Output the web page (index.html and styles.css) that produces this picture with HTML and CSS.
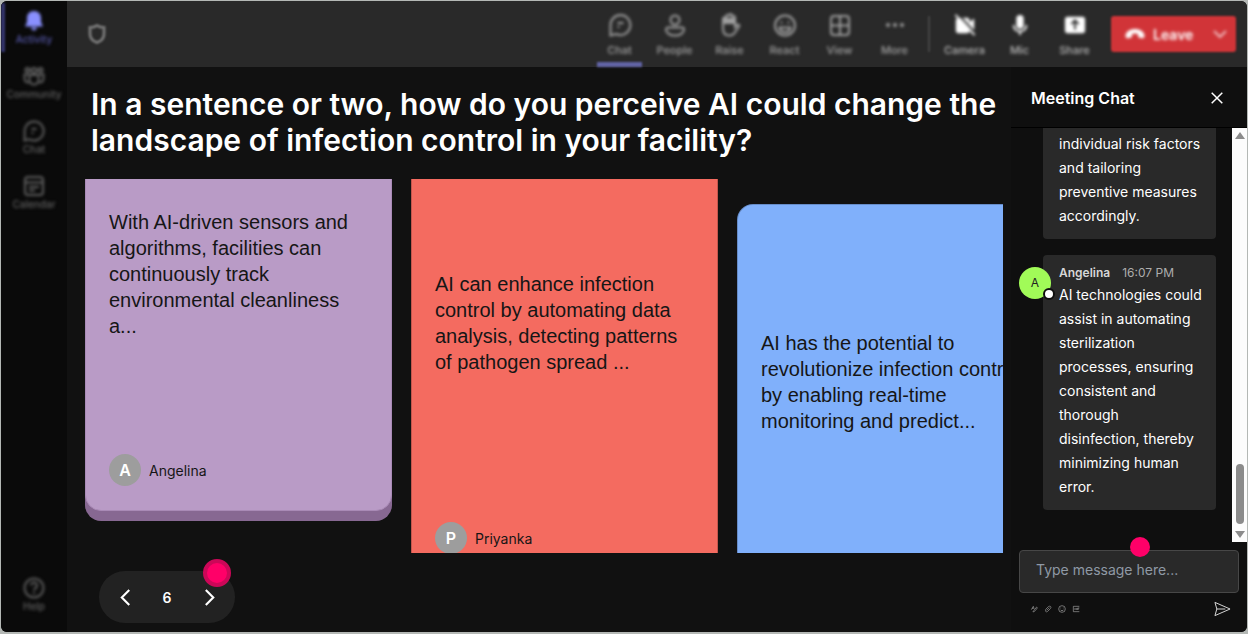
FILE: index.html
```html
<!DOCTYPE html>
<html lang="en">
<head>
    <meta charset="UTF-8">
    <meta name="viewport" content="width=device-width, initial-scale=1.0">
    <title>Meeting</title>
    <link rel="stylesheet" href="styles.css">
</head>
<body>
<div class="app">
    <nav class="sidebar">
        <button type="button" class="side-item active">
            <svg viewBox="0 0 22 22" fill="currentColor"><path d="M11 1c-4.200 0-7 3-7 7v4l-2 4.500h18L18 12V8c0-4-2.800-7-7-7zM8 17.500h6c-.4 2-1.500 3-3 3s-2.600-1-3-3z"/></svg>
            <span>Activity</span>
        </button>
        <button type="button" class="side-item">
            <svg viewBox="0 0 22 22" fill="none" stroke="currentColor" stroke-width="2"><circle cx="11" cy="5.500" r="2.500"/><circle cx="4.500" cy="5" r="2"/><circle cx="17.500" cy="5" r="2"/><path d="M6.500 10h9v5a4.500 4.500 0 0 1-9 0zM6 9.500H1.500V13c0 3 2 4.500 4.500 4.500M16 9.500h4.500V13c0 3-2 4.500-4.500 4.500"/></svg>
            <span>Community</span>
        </button>
        <button type="button" class="side-item">
            <svg viewBox="0 0 22 22" fill="none" stroke="currentColor" stroke-width="2"><path d="M11 1.500a9.500 9.500 0 1 1-4.500 17.800L1.500 20.500l.2-8A9.500 9.500 0 0 1 11 1.500zM8.500 9h5M8.500 13h2"/></svg>
            <span>Chat</span>
        </button>
        <button type="button" class="side-item">
            <svg viewBox="0 0 22 22" fill="none" stroke="currentColor" stroke-width="2"><rect x="2" y="2" width="18" height="18" rx="3"/><path d="M2 7.500h18M6 12h10M6 15.500h6"/></svg>
            <span>Calendar</span>
        </button>
        <button type="button" class="side-item side-help">
            <svg viewBox="0 0 22 22" fill="none" stroke="currentColor" stroke-width="2"><circle cx="11" cy="11" r="9.500"/><path d="M8 8.500a3 3 0 1 1 4.500 2.600c-1 .6-1.500 1.200-1.500 2.400M11 15v2"/></svg>
            <span>Help</span>
        </button>
    </nav>

    <div class="main">
        <header class="topbar">
            <svg class="shield" viewBox="0 0 20 20" fill="none" stroke="currentColor" stroke-width="3"><path d="M10 1.500c2 1.400 4.500 2 7 2V10c0 4-2.500 7-7 8.500C5.500 17 3 14 3 10V3.500c2.500 0 5-.6 7-2z"/></svg>
            <div class="tools">
                <button type="button" class="tool selected">
                    <svg viewBox="0 0 24 24" fill="none" stroke="currentColor" stroke-width="2"><path d="M12.500 2a10 10 0 1 1-4.500 19L2.500 22.500V12A10 10 0 0 1 12.500 2zM9.500 10h6M9.500 14h2"/></svg>
                    <span>Chat</span>
                </button>
                <button type="button" class="tool">
                    <svg viewBox="0 0 24 24" fill="none" stroke="currentColor" stroke-width="2"><circle cx="12" cy="7" r="4.500"/><path d="M5 14.500h14a2 2 0 0 1 2 2c0 3.500-4 6-9 6s-9-2.500-9-6a2 2 0 0 1 2-2z"/></svg>
                    <span>People</span>
                </button>
                <button type="button" class="tool">
                    <svg viewBox="0 0 24 24" fill="none" stroke="currentColor" stroke-width="2"><path d="M5 12V6a1.500 1.500 0 0 1 3 0V3.500a1.500 1.500 0 0 1 3 0V2.500a1.500 1.500 0 0 1 3 0v2a1.500 1.500 0 0 1 3 0V14l2-2c1-1 3 0 2 1.500L16.500 20c-1 1.500-2.500 2.500-5 2.500-4.500 0-6.500-3-6.500-7z"/><path d="M5 6h12v4H5z" fill="currentColor"/></svg>
                    <span>Raise</span>
                </button>
                <button type="button" class="tool">
                    <svg viewBox="0 0 24 24" fill="none" stroke="currentColor" stroke-width="2"><circle cx="12" cy="12.500" r="10"/><path d="M6.500 14.500h11c-.5 3-2.500 4.500-5.500 4.500s-5-1.500-5.500-4.500zM8.500 8.500v2M15.500 8.500v2"/></svg>
                    <span>React</span>
                </button>
                <button type="button" class="tool">
                    <svg viewBox="0 0 24 24" fill="none" stroke="currentColor" stroke-width="2"><rect x="3" y="3" width="18" height="19" rx="3"/><path d="M12 3v19M3 12.500h18"/></svg>
                    <span>View</span>
                </button>
                <button type="button" class="tool">
                    <svg viewBox="0 0 24 24" fill="currentColor"><circle cx="5" cy="12" r="2"/><circle cx="12" cy="12" r="2"/><circle cx="19" cy="12" r="2"/></svg>
                    <span>More</span>
                </button>
            </div>
            <div class="divider"></div>
            <div class="tools tools-call">
                <button type="button" class="tool">
                    <svg viewBox="0 0 24 24" fill="currentColor"><path d="M2 6l3-2h9a3 3 0 0 1 3 3v2l5-4v15l-5-4v2a3 3 0 0 1-3 3H5a3 3 0 0 1-3-3z"/><path d="M5 1l18 19" stroke="#292929" stroke-width="2"/><path d="M1.500 1l21 22" stroke="currentColor" stroke-width="2"/></svg>
                    <span>Camera</span>
                </button>
                <button type="button" class="tool">
                    <svg viewBox="0 0 24 24" fill="currentColor"><rect x="8" y="1" width="8" height="15" rx="4"/><path d="M5 12c0 4 3 7 7 7s7-3 7-7M12 19v4" fill="none" stroke="currentColor" stroke-width="2"/></svg>
                    <span>Mic</span>
                </button>
                <button type="button" class="tool">
                    <svg viewBox="0 0 24 24" fill="currentColor"><rect x="1" y="3" width="22" height="18" rx="3"/><path d="M12 17V7M8 11l4-4 4 4" fill="none" stroke="#292929" stroke-width="2"/></svg>
                    <span>Share</span>
                </button>
            </div>
            <div class="leave">
                <button type="button" class="leave-btn">
                    <svg viewBox="0 0 20 12" fill="currentColor"><path d="M10 1C5 1 1 3.500.5 7.500c-.2 2 .8 3 2.500 2.700l2.500-.5c1-.2 1.500-1 1.500-2V6c2-.7 4-.7 6 0v1.700c0 1 .5 1.800 1.500 2l2.500.5c1.700.3 2.700-.7 2.500-2.700C19 3.500 15 1 10 1z"/></svg>
                    Leave
                </button>
                <button type="button" class="leave-more" aria-label="Leave options">
                    <svg viewBox="0 0 14 8" fill="none" stroke="currentColor" stroke-width="2"><path d="M1 1l6 6 6-6"/></svg>
                </button>
            </div>
        </header>

        <div class="content">
            <main class="stage">
                <h1>In a sentence or two, how do you perceive AI could change the landscape of infection control in your facility?</h1>

                <div class="board">
                    <article class="card card-purple">
                        <p>With AI-driven sensors and algorithms, facilities can continuously track environmental cleanliness a...</p>
                        <div class="author"><span class="initial">A</span>Angelina</div>
                    </article>
                    <article class="card card-red">
                        <p>AI can enhance infection control by automating data analysis, detecting patterns of pathogen spread ...</p>
                        <div class="author"><span class="initial">P</span>Priyanka</div>
                    </article>
                    <article class="card card-blue">
                        <p>AI has the potential to revolutionize infection control by enabling real-time monitoring and predict...</p>
                    </article>
                </div>

                <div class="pager">
                    <button type="button" aria-label="Previous">
                        <svg viewBox="0 0 10 16" fill="none" stroke="currentColor" stroke-width="2"><path d="M9 1L2 8l7 7"/></svg>
                    </button>
                    <span>6</span>
                    <button type="button" aria-label="Next">
                        <svg viewBox="0 0 10 16" fill="none" stroke="currentColor" stroke-width="2"><path d="M2 1l7 7-7 7"/></svg>
                    </button>
                    <i class="hotspot hotspot-ring"></i>
                </div>
            </main>

            <aside class="chat">
                <div class="chat-head">
                    <h2>Meeting Chat</h2>
                    <button type="button" aria-label="Close">
                        <svg viewBox="0 0 12 12" fill="none" stroke="currentColor" stroke-width="1.500"><path d="M.7.7l10.600 10.600M11.300.7L.7 11.300"/></svg>
                    </button>
                </div>

                <div class="chat-body">
                    <div class="messages">
                        <div class="message">
                            <p>individual risk factors and tailoring preventive measures accordingly.</p>
                        </div>
                        <div class="message">
                            <span class="avatar">A<i class="status"></i></span>
                            <div class="meta"><b>Angelina</b><time>16:07 PM</time></div>
                            <p>AI technologies could assist in automating sterilization processes, ensuring consistent and thorough<br>disinfection, thereby minimizing human error.</p>
                        </div>
                    </div>
                    <div class="scrollbar">
                        <svg viewBox="0 0 10 7" fill="currentColor"><path d="M5 0l5 7H0z"/></svg>
                        <div class="thumb"></div>
                        <svg viewBox="0 0 10 7" fill="currentColor"><path d="M5 7l5-7H0z"/></svg>
                    </div>
                </div>

                <form class="composer">
                    <div class="field">
                        <input type="text" name="message" aria-label="Message" placeholder="Type message here...">
                        <i class="hotspot"></i>
                    </div>
                    <div class="composer-tools">
                        <button type="button" aria-label="Format">
                            <svg viewBox="0 0 12 12" fill="none" stroke="currentColor"><path d="M2 7l3-5 1 4M3 5h2M4 10c2 1 5-2 7-6l-1-1-4 5-1 2"/></svg>
                        </button>
                        <button type="button" aria-label="Attach">
                            <svg viewBox="0 0 12 12" fill="none" stroke="currentColor"><path d="M4 8l4-4M3 6l3-3c3-3 6 0 3.500 2.500L6 9C3 12 1 9 3 6z"/></svg>
                        </button>
                        <button type="button" aria-label="Emoji">
                            <svg viewBox="0 0 12 12" fill="none" stroke="currentColor"><circle cx="6" cy="6" r="5"/><path d="M3.500 7c1 2 4 2 5 0M4 4v1M8 4v1"/></svg>
                        </button>
                        <button type="button" aria-label="GIF">
                            <svg viewBox="0 0 12 12" fill="none" stroke="currentColor"><path d="M11 2H2v8h9M4.500 4.500v3M6.500 4.500v3M8.500 7.500v-3H11M8.500 6h2"/></svg>
                        </button>
                        <button type="submit" class="send" aria-label="Send">
                            <svg viewBox="0 0 18 16" fill="none" stroke="currentColor"><path d="M1 1l16 7L1 15l2-7zM3 8h9"/></svg>
                        </button>
                    </div>
                </form>
            </aside>
        </div>
    </div>
</div>
</body>
</html>
```
FILE: styles.css
```css
* {
    box-sizing: border-box;
}
body {
    margin: 0;
    padding: 1px 1px 2px;
    height: 100vh;
    background: #b4b8b5;
    font-family: Inter, "Liberation Sans", sans-serif;
    color: white;
    overflow: hidden;
}
h1, h2, p {
    margin: 0;
}
button {
    padding: 0;
    border: none;
    background: none;
    color: inherit;
    font: inherit;
    cursor: pointer;
}
svg {
    display: block;
}
.app {
    display: flex;
    height: 100%;
    border-radius: 6px;
    background: #111111;
    overflow: hidden;
}

/* left navigation */
.sidebar {
    display: flex;
    flex-direction: column;
    gap: 6px;
    width: 66px;
    padding: 2px 0 13px;
    background: #0a0a0a;
}
.side-item {
    display: flex;
    flex-direction: column;
    align-items: center;
    height: 49px;
    padding-top: 7px;
    color: #606060;
    font-size: 10px;
    font-weight: 500;
    line-height: 14px;
    filter: blur(1px);
}
.side-item svg,
.side-item span,
.tool svg,
.tool span {
    filter: blur(1px);
}
.side-item svg {
    width: 22px;
    height: 22px;
}
.side-item.active {
    border-left: 4px solid #34356e;
    padding-right: 4px;
    color: #5658aa;
}
.side-item.active svg {
    color: #8a90ff;
}
.side-help {
    margin-top: auto;
}

/* top bar */
.main {
    display: flex;
    flex-direction: column;
    flex: 1;
    min-width: 0;
}
.topbar {
    display: flex;
    align-items: center;
    height: 66px;
    padding: 0 11px 0 20px;
    background: #292929;
}
.topbar > * {
    filter: blur(1px);
}
.shield {
    width: 20px;
    height: 20px;
    margin-right: auto;
    color: #757575;
}
.tools {
    display: flex;
    gap: 10px;
    height: 100%;
}
.tool {
    display: flex;
    flex-direction: column;
    align-items: center;
    width: 45px;
    padding-top: 12px;
    border-bottom: 5px solid transparent;
    color: #a0a0a0;
    font-size: 11px;
    font-weight: 500;
    line-height: 14px;
}
.tool svg {
    width: 24px;
    height: 24px;
    margin-bottom: 6px;
}
.tool.selected {
    border-color: #6264a7;
}
.tools-call .tool {
    color: #b8b8b8;
}
.tools-call svg {
    width: 22px;
    color: white;
}
.divider {
    width: 2px;
    height: 36px;
    margin: 0 12px 0 11px;
    background: #444444;
}
.leave {
    display: flex;
    align-items: center;
    justify-content: space-between;
    width: 125px;
    height: 36px;
    margin-left: 14px;
    padding: 0 9px 0 14px;
    border-radius: 3px;
    background: #d13438;
    color: white;
}
.leave-btn {
    display: flex;
    align-items: center;
    gap: 8px;
    font-size: 14px;
    font-weight: 600;
}
.leave-btn,
.leave-more {
    filter: blur(1px);
}
.leave-btn svg {
    width: 20px;
    height: 12px;
}
.leave-more {
    color: #f0c0c2;
}
.leave-more svg {
    width: 14px;
    height: 8px;
}

/* question and answer cards */
.content {
    display: flex;
    flex: 1;
    min-height: 0;
}
.stage {
    display: flex;
    flex-direction: column;
    flex: 1;
    min-width: 0;
    padding: 19px 8px 9px 18px;
}
h1 {
    padding-left: 6px;
    font-size: 30px;
    font-weight: 600;
    line-height: 36px;
}
.board {
    display: flex;
    align-items: flex-start;
    flex: 1;
    gap: 19px;
    min-height: 0;
    margin: 21px 0 18px;
    overflow: hidden;
}
.card {
    display: flex;
    flex-direction: column;
    justify-content: space-between;
    flex: 0 0 307px;
    padding: 125px 23px 24px;
    border: 1px solid rgba(0, 0, 0, 0.2);
    border-radius: 16px;
    color: #161616;
    font-size: 14px;
}
.card p {
    font-family: "Liberation Sans", Arial, sans-serif;
    font-size: 20px;
    line-height: 26px;
}
.card-purple {
    height: 428px;
    margin-top: -96px;
    background: #b99bc6;
    border-color: #a98ab6;
    box-shadow: 0 10px 0 #876892;
}
.card-red {
    height: 434px;
    margin-top: -34px;
    background: #f46b60;
}
.card-blue {
    height: 434px;
    margin-top: 25px;
    background: #80b0fb;
}
.author {
    display: flex;
    align-items: center;
    gap: 8px;
}
.initial {
    width: 32px;
    border-radius: 50%;
    background: #9d9d9d;
    color: white;
    font-size: 16px;
    font-weight: 600;
    line-height: 32px;
    text-align: center;
}
.pager {
    position: relative;
    display: flex;
    align-items: center;
    justify-content: space-between;
    width: 136px;
    height: 52px;
    margin-left: 14px;
    padding: 0 20px;
    border-radius: 26px;
    background: #222222;
    font-size: 14px;
    font-weight: 600;
}
.pager svg {
    width: 12px;
    height: 17px;
}
.hotspot {
    position: absolute;
    top: -13px;
    right: 89px;
    width: 20px;
    height: 20px;
    border-radius: 50%;
    background: #ff0068;
}
.hotspot-ring {
    top: -12px;
    right: 4px;
    width: 28px;
    height: 28px;
    border: 4px solid #cc0758;
}

/* meeting chat */
.chat {
    display: flex;
    flex-direction: column;
    width: 236px;
    background: #0f0f0f;
}
.chat-head {
    display: flex;
    align-items: center;
    justify-content: space-between;
    height: 61px;
    padding: 2px 24px 0 20px;
    border-bottom: 1px solid black;
}
.chat-head h2 {
    font-size: 16px;
    font-weight: 600;
}
.chat-head svg {
    width: 12px;
    height: 12px;
}
.chat-body {
    display: flex;
    flex: 1;
    min-height: 0;
}
.messages {
    display: flex;
    flex-direction: column;
    justify-content: flex-end;
    flex: 1;
    gap: 16px;
    padding: 0 16px 32px 32px;
    overflow: hidden;
}
.message {
    position: relative;
    padding: 8px 8px 11px 16px;
    border-radius: 4px;
    background: #292929;
    font-size: 14px;
    line-height: 24px;
}
.meta {
    display: flex;
    gap: 12px;
    color: #d6d6d6;
    font-size: 12px;
    line-height: 20px;
}
.meta b {
    font-weight: 600;
}
.meta time {
    color: #adadad;
}
.avatar {
    position: absolute;
    top: 12px;
    left: -24px;
    width: 32px;
    height: 32px;
    border-radius: 50%;
    background: #a1fb58;
    color: #222222;
    font-size: 12px;
    line-height: 32px;
    text-align: center;
}
.status {
    position: absolute;
    right: -4px;
    bottom: -1px;
    width: 12px;
    height: 12px;
    border: 2px solid #0f0f0f;
    border-radius: 50%;
    background: white;
}
.scrollbar {
    display: flex;
    flex-direction: column;
    align-items: center;
    width: 15px;
    padding: 4px 0;
    background: #fcfcfc;
    color: #8b8b8b;
}
.scrollbar svg {
    width: 10px;
    height: 7px;
}
.thumb {
    width: 8px;
    height: 60px;
    margin: auto 0 7px;
    border-radius: 4px;
    background: #8b8b8b;
}
.composer {
    padding: 8px 8px 15px;
}
.field {
    position: relative;
}
.field input {
    display: block;
    width: 100%;
    height: 43px;
    padding: 0 16px 4px;
    border: 1px solid #474747;
    border-radius: 4px;
    background: #292929;
    color: white;
    font: inherit;
    font-size: 14px;
}
.field input::placeholder {
    color: #8f99a5;
}
.composer-tools {
    display: flex;
    align-items: center;
    gap: 6px;
    padding: 8px 8px 0 11px;
    color: #a0a0a0;
}
.composer-tools svg {
    width: 8px;
    height: 8px;
}
.composer-tools .send {
    margin-left: auto;
    color: #e0e0e0;
}
.composer-tools .send svg {
    width: 17px;
    height: 16px;
}
```
